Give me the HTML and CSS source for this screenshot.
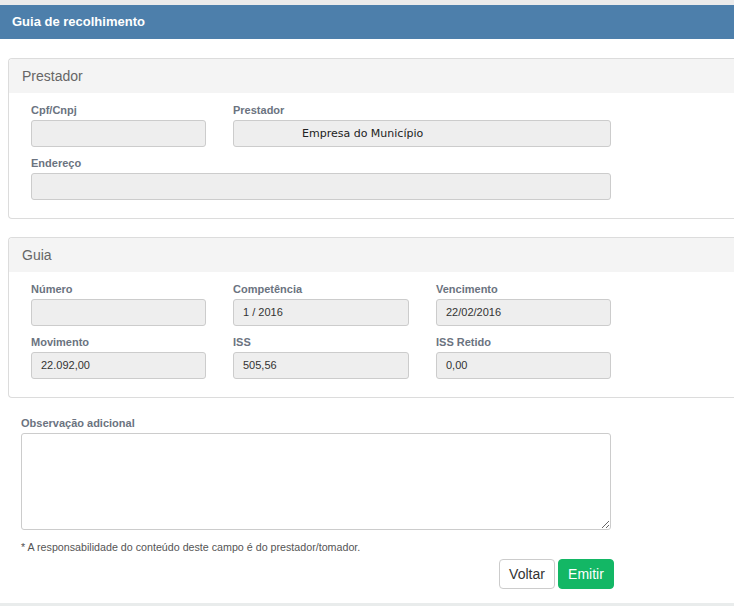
FILE: index.html
```html
<!DOCTYPE html>
<html lang="pt">
<head>
<meta charset="utf-8">
<title>Guia de recolhimento</title>
<link rel="stylesheet" href="styles.css">
</head>
<body>
<div class="topstrip"></div>
<header class="titlebar">Guia de recolhimento</header>
<main class="content">
  <section class="panel">
    <div class="panel-head">Prestador</div>
    <div class="panel-body">
      <div class="grid">
        <div class="field"><label>Cpf/Cnpj</label><div class="input"></div></div>
        <div class="field span2"><label>Prestador</label><div class="input company">Empresa do Município</div></div>
        <div class="field span3"><label>Endereço</label><div class="input"></div></div>
      </div>
    </div>
  </section>
  <section class="panel panel-last">
    <div class="panel-head">Guia</div>
    <div class="panel-body">
      <div class="grid">
        <div class="field"><label>Número</label><div class="input"></div></div>
        <div class="field"><label>Competência</label><div class="input">1 / 2016</div></div>
        <div class="field"><label>Vencimento</label><div class="input">22/02/2016</div></div>
        <div class="field"><label>Movimento</label><div class="input">22.092,00</div></div>
        <div class="field"><label>ISS</label><div class="input">505,56</div></div>
        <div class="field"><label>ISS Retido</label><div class="input">0,00</div></div>
      </div>
    </div>
  </section>
  <section class="obs">
    <label class="obs-label">Observação adicional</label>
    <textarea class="obs-text"></textarea>
    <p class="note">* A responsabilidade do conteúdo deste campo é do prestador/tomador.</p>
    <div class="actions">
      <button class="btn btn-default">Voltar</button>
      <button class="btn btn-success">Emitir</button>
    </div>
  </section>
</main>
<div class="bottomstrip"></div>
</body>
</html>
```
FILE: styles.css
```css
html, body {
  margin: 0;
  padding: 0;
  background: #fff;
  overflow: hidden;
}
body {
  font-family: "Liberation Sans", Arial, sans-serif;
  width: 734px;
  height: 606px;
  position: relative;
}
.topstrip {
  height: 5px;
  background: #ebebeb;
}
.titlebar {
  height: 34px;
  background: #4d7fab;
  color: #fff;
  font-weight: bold;
  font-size: 13px;
  line-height: 34px;
  padding-left: 12px;
  box-sizing: border-box;
}
.content {
  padding-top: 19px;
}
.panel {
  margin-left: 8px;
  margin-bottom: 18px;
  border: 1px solid #dcdcdc;
  border-right: none;
  border-radius: 4px 0 0 4px;
  background: #fff;
}
.panel-last {
  margin-bottom: 18px;
}
.panel-head {
  height: 34px;
  line-height: 34px;
  background: #f4f4f4;
  color: #666;
  font-size: 14px;
  padding-left: 13px;
  border-radius: 4px 0 0 0;
}
.panel-body {
  padding: 10px 0 18px 22px;
}
.grid {
  display: grid;
  grid-template-columns: 175px 176px 175px;
  column-gap: 27px;
  row-gap: 9px;
}
.span2 { grid-column: span 2; }
.span3 { grid-column: span 3; }
.field label {
  display: block;
  font-size: 11px;
  font-weight: bold;
  color: #6b7380;
  line-height: 14px;
  margin-bottom: 3px;
}
.input {
  height: 27px;
  box-sizing: border-box;
  background: #eeeeee;
  border: 1px solid #cccccc;
  border-radius: 3px;
  font-size: 11px;
  line-height: 25px;
  color: #333;
  padding-left: 9px;
}
.input.company {
  font-family: "DejaVu Sans", Verdana, sans-serif;
  font-size: 11px;
  color: #222;
  padding-left: 68px;
}
.obs {
  padding-left: 21px;
  width: 593px;
  display: flex;
  flex-direction: column;
}
.obs-label {
  font-size: 11px;
  font-weight: bold;
  color: #6b7380;
  line-height: 14px;
  margin-bottom: 3px;
}
.obs-text {
  width: 590px;
  height: 97px;
  box-sizing: border-box;
  border: 1px solid #cccccc;
  border-radius: 3px;
  margin: 0;
  resize: vertical;
  background: #fff;
}
.note {
  margin: 10px 0 0 0;
  font-size: 10.7px;
  line-height: 14px;
  color: #555;
}
.actions {
  display: flex;
  justify-content: flex-end;
  gap: 3px;
  margin-top: 5px;
}
.btn {
  width: 56px;
  height: 30px;
  box-sizing: border-box;
  border-radius: 4px;
  font-family: "Liberation Sans", Arial, sans-serif;
  font-size: 14px;
  padding: 0;
  cursor: pointer;
}
.btn-default {
  background: #fff;
  border: 1px solid #cccccc;
  color: #333;
}
.btn-success {
  background: #13b765;
  border: 1px solid #13b765;
  color: #fff;
}
.bottomstrip {
  position: absolute;
  left: 0;
  right: 0;
  bottom: 0;
  height: 3px;
  background: #e9ecec;
}
```
